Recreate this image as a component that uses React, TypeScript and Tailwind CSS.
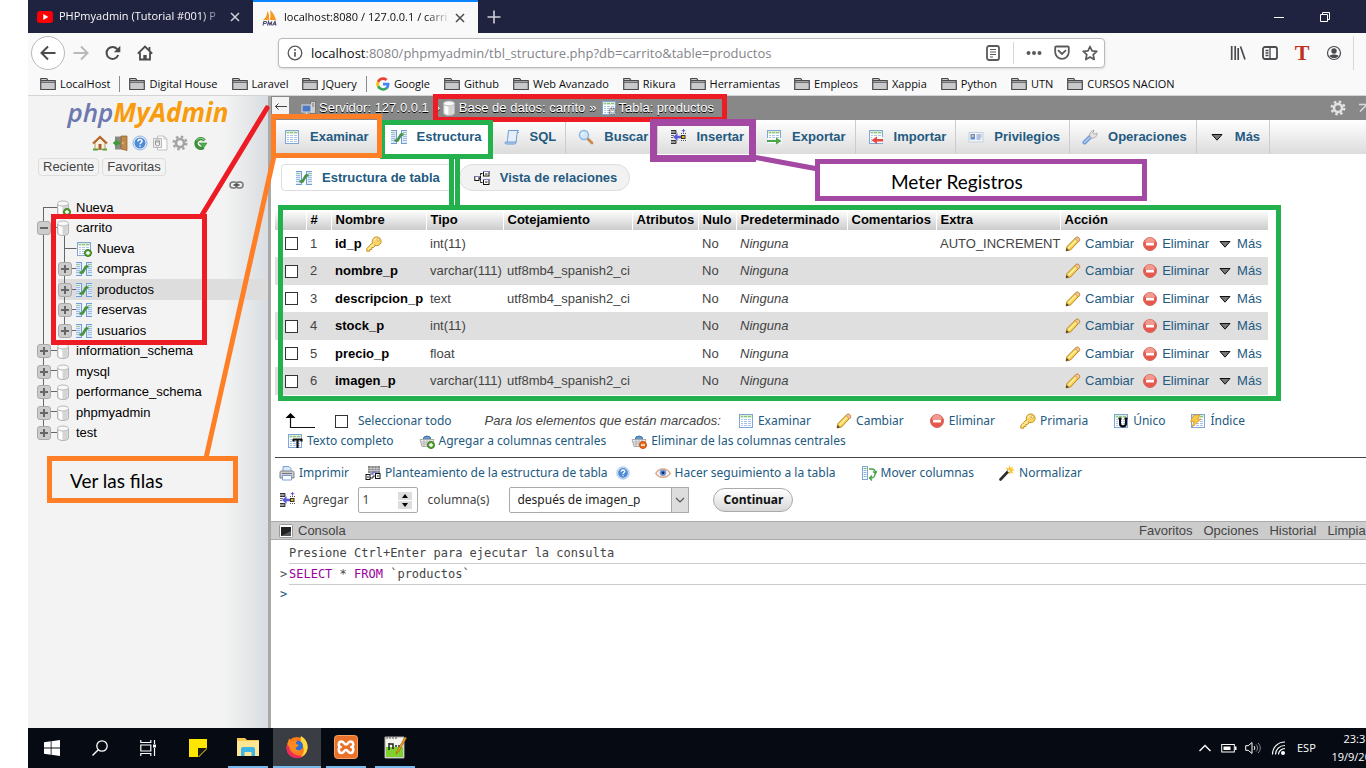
import React from 'react';

type P = { children: React.ReactNode; s?: number; w?: number; box?: string; cls?: string };
const Svg = ({ children, s = 16, w, box = '0 0 16 16', cls = '' }: P) => (
  <svg width={w ?? s} height={s} viewBox={box} fill="none" className={'shrink-0 ' + cls} aria-hidden="true">
    {children}
  </svg>
);

/* ---------- phpMyAdmin icons ---------- */
const Grid = () => (
  <>
    <rect x="1.5" y="1.5" width="13" height="13" fill="#fff" stroke="#7fa6d8" />
    <rect x="2" y="2" width="12" height="3" fill="#d8ecd0" />
    <path d="M3 3.5h2M6 3.5h3M10 3.5h3" stroke="#8fc27f" />
    <path d="M3 6.5h2M6 6.5h3M10 6.5h3M3 8.5h2M6 8.5h3M10 8.5h3M3 10.5h2M6 10.5h3M10 10.5h3M3 12.5h2M6 12.5h3M10 12.5h3" stroke="#a9c4ea" />
  </>
);
const Browse = () => <Svg><Grid /></Svg>;
const Plus = () => (
  <>
    <circle cx="12" cy="12" r="3.5" fill="#5aa334" stroke="#3c7d1f" />
    <path d="M10 12h4M12 10v4" stroke="#fff" strokeWidth="1.3" />
  </>
);
const Minus = () => (
  <>
    <circle cx="12" cy="12" r="3.5" fill="#ee6a1c" stroke="#c94f0d" />
    <path d="M10 12h4" stroke="#fff" strokeWidth="1.4" />
  </>
);
const Cyl = () => (
  <>
    <path d="M2.5 4v9c0 1.400 2.500 2.500 5.500 2.500s5.500-1.100 5.500-2.500V4" fill="#e6e6e6" stroke="#b4b4b4" />
    <path d="M4 5.500v8c1 .8 2 1 3 1.200V6.500z" fill="#fff" />
    <path d="M8 7v8c2 0 3.500-.5 4.500-1.500V5.500z" fill="#c9c9c9" opacity=".6" />
    <ellipse cx="8" cy="3.500" rx="5.500" ry="2.500" fill="#f8f8f8" stroke="#b9b9b9" />
  </>
);
const Db = () => <Svg><Cyl /></Svg>;
const DbNew = () => <Svg><Cyl /><Plus /></Svg>;
const TableNew = () => <Svg><Grid /><Plus /></Svg>;
const Gear = ({ c = '#a3a3a3' }: { c?: string }) => (
  <Svg>
    <circle cx="8" cy="8" r="6.300" stroke={c} strokeWidth="2.400" strokeDasharray="2.500 2.450" />
    <circle cx="8" cy="8" r="4" stroke={c} strokeWidth="2.600" />
  </Svg>
);
const TableGear = () => (
  <Svg>
    <Grid />
    <circle cx="11.500" cy="11.500" r="3" stroke="#777" strokeWidth="2.200" strokeDasharray="1.600 .75" />
    <circle cx="11.500" cy="11.500" r="2" stroke="#bbb" strokeWidth="1.400" />
  </Svg>
);
const Structure = () => (
  <Svg>
    <path d="M0 1.500h5.500v13H0zM10.500 1.500H16v13h-5.500z" fill="#dfebfa" />
    <path d="M0 1.500h5.500M0 14.500h5.500M5.500 1v14M10.500 1.500H16M10.500 14.500H16M10.500 1v14" stroke="#6f9bd6" />
    <path d="M0 3.500h4M12 3.500h4" stroke="#9ccb8e" />
    <path d="M0 5.500h4M0 7.500h4M0 9.500h4M0 11.500h4M12 5.500h4M12 7.500h4M12 9.500h4M12 11.500h4" stroke="#9dbce8" />
    <path d="M3.500 11.500h3L10 5.500h2.500" stroke="#459340" strokeWidth="2.600" strokeLinejoin="round" />
  </Svg>
);
const Sql = () => (
  <Svg>
    <path d="M4.500 1.500h10c-1.500 1-1.200 2-1.500 4l-1 8H2.500c1-1 1-2 1.200-4z" fill="#e4effb" stroke="#6b9bd2" />
    <path d="M1 13.500c0 1 .6 1.500 1.500 1.500h8c1 0 1.500-.8 1.500-2H1.500z" fill="#bcd4f0" stroke="#6b9bd2" />
    <path d="M13 3.500h2" stroke="#6b9bd2" />
  </Svg>
);
const Search = () => (
  <Svg>
    <path d="M9.500 9.500l4.500 4.500" stroke="#c98a4b" strokeWidth="2.800" strokeLinecap="round" />
    <circle cx="6" cy="6" r="4.500" fill="#d3e6fb" stroke="#8eb6e6" strokeWidth="1.500" />
    <path d="M3.500 6a2.500 2.500 0 0 1 2.500-2.500" stroke="#fff" />
  </Svg>
);
const Insert = () => (
  <Svg>
    <path d="M1 1.500h5v3H1M1 11.500h5v3H1" fill="#999" stroke="#333" />
    <path d="M1 6.500h3M1 8.500h2" stroke="#666" />
    <path d="M3 8l4.500-4V6.800H11v2.400H7.500V12z" fill="#5b5bd6" />
    <path d="M13.500 0v3.500M11.700 1.700h3.600" stroke="#5b5bd6" />
    <rect x="11.500" y="6.500" width="3.500" height="3" fill="#f2b712" stroke="#333" />
    <path d="M11 4.500h5M11 11.500h5" stroke="#555" strokeDasharray="1 1" />
  </Svg>
);
const Export = () => (
  <Svg>
    <Grid />
    <rect x="1" y="9" width="15" height="6" fill="#fff" opacity=".8" />
    <path d="M1 11h9V8.500l5.500 3.500-5.500 3.500V13H1z" fill="#4da545" />
  </Svg>
);
const Import = () => (
  <Svg>
    <Grid />
    <rect x="4" y="8" width="11" height="6" fill="#fff" opacity=".8" />
    <path d="M15 10H9V7.500L3.500 11.200 9 15v-2.500h6z" fill="#e5493f" />
  </Svg>
);
const Priv = () => (
  <Svg>
    <rect x="1" y="3.500" width="14" height="9.500" fill="#f1f5fb" stroke="#c5cfdd" />
    <rect x="2.500" y="5" width="4.500" height="5.500" fill="#5d8fd0" />
    <circle cx="4.700" cy="7" r="1.300" fill="#e5b98a" />
    <path d="M8.500 6h5M8.500 8h5M8.500 10h4" stroke="#6f93c4" />
  </Svg>
);
const Wrench = () => (
  <Svg>
    <path d="M2.500 13.500l6-6" stroke="#6d97d8" strokeWidth="4" strokeLinecap="round" />
    <path d="M2.500 13.500l5-5" stroke="#b7cff3" strokeWidth="1.500" strokeLinecap="round" />
    <path d="M8 8C7 5 8.500 2 12 1.200L10.800 4l1.400 1.300L15 4c.2 3.500-2.500 5.500-5.500 5z" fill="#e3e3e3" stroke="#999" strokeWidth=".8" />
  </Svg>
);
const Tri = () => (
  <Svg s={14} w={16} box="-1 0 16 14"><path d="M2 4.500h10L7 10.200z" fill="#777" stroke="#111" strokeLinejoin="round" /></Svg>
);
const Relation = () => (
  <Svg>
    <path d="M5 8.500h1.500M6.500 3.500v9M6.500 3.500H9M6.500 12.500H9" stroke="#111" strokeDasharray="2 .6" />
    <rect x=".8" y="6.500" width="4.200" height="4" fill="#fff" stroke="#111" />
    <rect x="9.500" y="1.500" width="5.500" height="4.500" fill="#fff" stroke="#111" />
    <rect x="9.500" y="9.500" width="5.500" height="5" fill="#fff" stroke="#111" />
    <path d="M9 1.500h6.500M9 9.500h6.500M.5 6.500h4.500" stroke="#7b7bd0" />
    <path d="M11 4h2.500M11 12h2.500" stroke="#111" />
  </Svg>
);
const KeyIcon = () => (
  <Svg>
    <path d="M.8 12.500v2.700h3v-1.700h2v-2h1.700L9.500 9.500 6.500 6.500z" fill="#f9da6c" stroke="#c99323" strokeLinejoin="round" />
    <circle cx="10.700" cy="5.300" r="4.400" fill="#f8d567" stroke="#c99323" />
    <path d="M2 13.500l6-6" stroke="#fdedaa" strokeWidth="1.200" />
    <path d="M8 4.500a3 3 0 0 1 2.500-2" stroke="#fff4c4" strokeWidth="1.200" />
    <circle cx="12.300" cy="3.800" r="1.200" fill="#fff" stroke="#c99323" strokeWidth=".7" />
  </Svg>
);
const Pencil = () => (
  <Svg>
    <path d="M1 15l1-4.500 8.500-8.500c1-1 2.500-1 3.300-.2s1 2.300 0 3.300L5.500 14z" fill="#f8d34c" stroke="#b9822b" />
    <path d="M3.500 12L11.500 4" stroke="#fdf0a8" strokeWidth="1.500" />
    <path d="M10 2.500l3.500 3.500 1-1.200c.6-1 .2-2.300-.5-3s-2-.9-2.800-.3z" fill="#f4c3a4" stroke="#b9822b" strokeWidth=".7" />
    <path d="M1 15l.7-2.800L3.800 14z" fill="#333" />
  </Svg>
);
const Drop = () => (
  <Svg>
    <circle cx="8" cy="8" r="6.500" fill="#e8574b" stroke="#d2695f" />
    <path d="M3 6.500a5 5 0 0 1 10 0z" fill="#f29a90" />
    <rect x="4" y="6.700" width="8" height="2.800" rx=".5" fill="#fff" />
  </Svg>
);
const Letter = ({ t }: { t: 'T' | 'U' }) => (
  <Svg>
    <Grid />
    {t === 'T' ? <path d="M6 6.500h9M10.500 6.500V15M6.500 6v2.500M14.500 6v2.500" stroke="#111" strokeWidth="2.200" />
      : <path d="M7 5v5.500c0 3.800 6 3.800 6 0V5M5.500 5.500h3M11.500 5.500h3" stroke="#111" strokeWidth="2.100" />}
  </Svg>
);
const LetterT = () => <Letter t="T" />;
const LetterU = () => <Letter t="U" />;
const Index = () => (
  <Svg><Grid /><path d="M4 2h6L7.500 6H11L2 14l2.200-5.500H.5z" fill="#fbc94a" stroke="#d9962a" strokeWidth=".8" /></Svg>
);
const Basket = () => (
  <>
    <path d="M4 7a4 4 0 0 1 8 0" fill="#5f97cf" stroke="#3f74ad" />
    <path d="M1 6.500h14l-2 7H3z" fill="#ececec" stroke="#aaa" />
    <path d="M2 9h12M3 11h10M5 7v6M8 7v6M11 7v6" stroke="#b5b5b5" />
  </>
);
const CentralAdd = () => <Svg><Basket /><Plus /></Svg>;
const CentralDel = () => <Svg><Basket /><Minus /></Svg>;
const Print = () => (
  <Svg>
    <path d="M4 7V1.500h6L12 3.500V7" fill="#dbe9fb" stroke="#7b9fd4" />
    <path d="M1 7.500C1 6.500 1.600 6 2.500 6h11c1 0 1.500.6 1.500 1.500V13H1z" fill="#c9ccd2" stroke="#7d828c" />
    <path d="M3.500 10.500h9v4.500h-9z" fill="#fff" stroke="#7b9fd4" />
    <path d="M3 8.500h10" stroke="#777" />
  </Svg>
);
const Propose = () => (
  <Svg>
    <rect x="3" y="1" width="12" height="7" fill="#888" />
    <path d="M3 3.500h12M3 5.500h12M6 1v7M9 1v7M12 1v7" stroke="#ddd" strokeWidth=".6" />
    <rect x="1" y="9.500" width="4" height="5" fill="#fff" stroke="#111" />
    <rect x="10.500" y="8.500" width="4.500" height="5" fill="#fff" stroke="#111" />
    <path d="M5 9h3V7h4" stroke="#7b7bd0" strokeWidth="1.500" />
    <path d="M2 12h2M12 11h2M5 13h3v-2h2" stroke="#111" strokeWidth=".9" />
  </Svg>
);
const Help = ({ s = 16 }: { s?: number }) => (
  <Svg s={s}>
    <circle cx="8" cy="8" r="7" fill="#eef5fd" stroke="#8fb3e0" />
    <circle cx="8" cy="8" r="5.600" fill="#4f8bd6" />
    <path d="M6 6.500c0-2.600 4-2.500 4-.2 0 1.500-2 1.400-2 3M8 10.500v1.300" stroke="#fff" strokeWidth="1.500" />
  </Svg>
);
const EyeIcon = () => (
  <Svg>
    <path d="M.8 8.300C4 2.500 12 2.500 15.200 8.300 12 13.500 4 13.500.8 8.300z" fill="#fdf6f1" stroke="#dca889" strokeWidth="1.400" />
    <circle cx="8" cy="7.800" r="3.300" fill="#6a9be0" />
    <circle cx="8" cy="7.800" r="1.500" fill="#162a55" />
  </Svg>
);
const Move = () => (
  <Svg>
    <rect x="1.500" y="1.500" width="5" height="13" fill="#fff" stroke="#7fa6d8" />
    <path d="M2.500 3.500h3" stroke="#6fb35f" />
    <path d="M2.500 5.500h3M2.500 7.500h3M2.500 9.500h3M2.500 11.500h3" stroke="#8fb1e3" />
    <path d="M8 4h2.500c3 0 4 2 4 4M14 9c0 2-1.500 4-4 4H8.500M11 10.500L8.500 13l2.500 2.500M12 6.500l2.500 2L16 6" stroke="#47a04a" strokeWidth="1.400" />
  </Svg>
);
const WandIcon = () => (
  <Svg>
    <path d="M10.500 0l1 3L14 1.500 13 4l3 1-3 1 1.500 3-3-1.500-1 2.500-1-3-3 .5L8.500 5 6.500 2.500l3 1z" fill="#fbc52d" />
    <path d="M1.500 14.500l7.500-8" stroke="#2c2c2c" strokeWidth="2.600" strokeLinecap="round" />
    <path d="M9 6.800l1.400-1.500" stroke="#eee" strokeWidth="2.400" />
  </Svg>
);
const HomePma = () => (
  <Svg>
    <path d="M3 8v6.500h10V8L8 3z" fill="#f7f0dc" stroke="#b99a68" />
    <path d="M1 8.500L8 2l7 6.500" stroke="#b5662c" strokeWidth="2.200" />
    <rect x="6.500" y="9" width="3" height="5.500" fill="#a8632d" />
    <path d="M1 14.500h5M10.500 14.500H15" stroke="#5ba33c" strokeWidth="2" />
  </Svg>
);
const Exit = () => (
  <Svg>
    <path d="M3 1.500h6v13H3z" fill="#8a8a8a" />
    <path d="M9 1h6v14.500L9 14z" fill="#c08a4a" stroke="#8d5d25" strokeWidth=".7" />
    <circle cx="10.800" cy="8" r=".8" fill="#ffe08a" />
    <path d="M8 6.500H5V4L.8 8 5 12V9.500h3z" fill="#3f9a37" />
  </Svg>
);
const Doc = () => (
  <Svg>
    <path d="M5.500 1h6.500l3 3v11H5.500z" fill="#fcfcfc" stroke="#c2c2c2" />
    <path d="M12 1v3h3" stroke="#c2c2c2" />
    <path d="M1.500 3.500h8v9h-8z" fill="#ededed" stroke="#b8b8b8" />
    <ellipse cx="5.500" cy="6" rx="2" ry="1" stroke="#999" /><path d="M3.500 6v4c0 1 4 1 4 0V6" stroke="#999" />
  </Svg>
);
const Reload = () => (
  <Svg>
    <path d="M12.500 5.500A4.800 4.800 0 1 0 11.500 12.500" stroke="#3d8f3a" strokeWidth="3.400" />
    <path d="M12.300 5A4.800 4.800 0 0 0 4.500 5.500" stroke="#8fd08a" strokeWidth="1.200" />
    <path d="M7 8h8l-3.500 5z" fill="#4fae4a" stroke="#3d8f3a" strokeWidth=".6" />
  </Svg>
);
const Chain = () => (
  <Svg s={10} w={15} box="0 0 15 10">
    <rect x="1" y="2" width="7" height="6" rx="3" stroke="#777" strokeWidth="1.500" />
    <rect x="7" y="2" width="7" height="6" rx="3" stroke="#777" strokeWidth="1.500" />
    <path d="M4.500 5h6" stroke="#444" strokeWidth="1.500" />
  </Svg>
);
const Server = () => (
  <Svg>
    <rect x="9.500" y="1.500" width="5" height="12" fill="#ccc" stroke="#777" />
    <path d="M11 4h2M11 6h2" stroke="#777" />
    <rect x="1" y="5" width="9" height="7" fill="#4d79c4" stroke="#ddd" />
    <path d="M3 14.500h6M5.500 12.500v2" stroke="#ddd" strokeWidth="1.500" />
  </Svg>
);
const Term = () => (
  <Svg s={14} box="0 0 14 14">
    <rect x=".5" y=".5" width="13" height="13" rx="1" fill="#fff" stroke="#999" />
    <rect x="2" y="3" width="10" height="9" fill="#222" /><path d="M2 12h10V7z" fill="#555" />
  </Svg>
);

/* ---------- browser chrome ---------- */
const Folder = () => (
  <Svg>
    <path d="M.7 13.500V2.500h6L8 4.500h7.300v9z" fill="#c9c9cb" stroke="#4a4a4e" strokeWidth="1.200" strokeLinejoin="round" />
    <path d="M1 6.200h14M1 4.500h7" stroke="#4a4a4e" />
  </Svg>
);
const GoogleG = () => (
  <Svg s={14} box="0 0 48 48">
    <path fill="#4285F4" d="M46 24.500c0-1.600-.1-3.100-.4-4.500H24v9h12.400c-.6 2.900-2.200 5.300-4.600 7l7.500 5.800C43.500 37.800 46 31.700 46 24.500z" />
    <path fill="#34A853" d="M24 47c6.200 0 11.400-2 15.300-5.500L31.800 36c-2 1.400-4.700 2.200-7.800 2.200-6 0-11-4-12.900-9.500l-7.700 6C7.200 42 15 47 24 47z" />
    <path fill="#FBBC05" d="M11.100 28.700c-.9-3-.9-6.300 0-9.300l-7.700-6c-3.200 6.500-3.200 14.800 0 21.300z" />
    <path fill="#EA4335" d="M24 10c3.400 0 6.400 1.200 8.800 3.400l6.600-6.600C35.400 3.200 30.200 1 24 1 15 1 7.200 6 3.400 13.400l7.700 6C13 14 18 10 24 10z" />
  </Svg>
);
const marks = ['LocalHost', '|', 'Digital House', 'Laravel', 'JQuery', '|', 'Google', 'Github', 'Web Avanzado', 'Rikura', 'Herramientas', 'Empleos', 'Xappia', 'Python', 'UTN', 'CURSOS NACION'];

function Chrome() {
  return (
    <header className="shrink-0 bg-[#f9f9fa] font-['Open_Sans',sans-serif] text-[#0c0c0d]">
      <div className="flex h-[33px] bg-[#202340] text-[11px]">
        <div className="flex w-[225px] items-center pl-[9px] text-[#f9f9fa]">
          <Svg><rect y="2" width="16" height="12" rx="3" fill="#f00" /><path d="M6.300 5l5 3-5 3z" fill="#fff" /></Svg>
          <span className="ml-[6px] w-[167px] whitespace-nowrap [mask-image:linear-gradient(to_right,#000_85%,transparent)]">PHPmyadmin (Tutorial #001) P</span>
          <button aria-label="Cerrar pestaña" className="ml-1"><Svg s={10} box="0 0 10 10"><path d="M1 1l8 8M9 1l-8 8" stroke="#d0d0d8" strokeWidth="1.500" /></Svg></button>
        </div>
        <div className="flex w-[225px] items-center border-t-2 border-[#0a84ff] bg-[#f9f9fa] pl-[9px]">
          <Svg>
            <path d="M1 10C4 8 5 5 5.500 1 7.500 4 7.500 8 6.500 10zM7.500 10c1.300-3 1.300-6 .5-10 3.500 3 5 6.500 6 10z" fill="#f8981d" />
            <path d="M1 15.500l.8-4h1.800c1.500 0 1 2-.3 2H1.700M5.500 15.500l1-4 1.200 3 2-3-.6 4M10.500 15.500l2.500-4 1 4M11.500 14.300h2.500" stroke="#4b4b6e" strokeWidth="1.100" />
          </Svg>
          <span className="ml-[6px] w-[167px] whitespace-nowrap [mask-image:linear-gradient(to_right,#000_85%,transparent)]">localhost:8080 / 127.0.0.1 / carri</span>
          <button aria-label="Cerrar pestaña" className="ml-1"><Svg s={10} box="0 0 10 10"><path d="M1 1l8 8M9 1l-8 8" stroke="#4a4a4f" strokeWidth="1.500" /></Svg></button>
        </div>
        <button aria-label="Nueva pestaña" className="ml-2"><Svg><path d="M8 1.500v13M1.500 8h13" stroke="#d0d0d8" strokeWidth="1.600" /></Svg></button>
        <div className="ml-auto flex items-center gap-9 pr-9">
          <button aria-label="Minimizar"><Svg s={10} box="0 0 10 10"><path d="M0 5.500h10" stroke="#fff" /></Svg></button>
          <button aria-label="Restaurar"><Svg s={10} box="0 0 10 10"><path d="M.5 2.500h7v7h-7zM2.500 2.500v-2h7v7h-2" stroke="#fff" /></Svg></button>
        </div>
      </div>
      <div className="flex h-10 items-center pl-[3px]">
        <button aria-label="Atrás" className="flex size-[34px] items-center justify-center rounded-full border border-[#b9b9ba] bg-white"><Svg><path d="M15.500 8H1.500M8 1.500L1.500 8 8 14.500" stroke="#4a4a4f" strokeWidth="2" /></Svg></button>
        <button aria-label="Adelante" className="ml-2"><Svg><path d="M.5 8h14M8 1.500L14.500 8 8 14.500" stroke="#b9b9ba" strokeWidth="2" /></Svg></button>
        <button aria-label="Recargar" className="ml-4"><Svg><path d="M13.200 10A6 6 0 1 1 12.500 4.500" stroke="#4a4a4f" strokeWidth="2" /><path d="M15.300.8v6.500H8.800z" fill="#4a4a4f" /></Svg></button>
        <button aria-label="Inicio" className="ml-4"><Svg><path d="M.8 8.700L8 1.500l7.200 7.200M3 7.500v7h10v-7M12.500 2v4" stroke="#4a4a4f" strokeWidth="1.800" /><path d="M6.300 14.500V10h3.400v4.500z" fill="#4a4a4f" /></Svg></button>
        <div className="ml-[125px] flex h-[30px] flex-1 items-center rounded-sm border border-[#b9b9bb] bg-white pl-2 pr-[6px] shadow-sm">
          <Svg><circle cx="8" cy="8" r="6.800" stroke="#5a5a5e" strokeWidth="1.300" /><path d="M8 7v4.800M8 4v1.700" stroke="#5a5a5e" strokeWidth="1.700" /></Svg>
          <span className="relative ml-2 flex-1 pt-[2px] text-[13px] text-[#84848a]">
            <input aria-label="Dirección" readOnly className="absolute inset-0 w-full bg-transparent outline-none" />
            <span className="text-[#0c0c0d]">localhost</span>:8080/phpmyadmin/tbl_structure.php?db=carrito&amp;table=productos
          </span>
          <Svg><rect x="2" y="1" width="12" height="14" rx="2" stroke="#5a5a5e" strokeWidth="1.800" /><path d="M5 4.500h6M5 7h6M5 9.500h6M5 12h3" stroke="#5a5a5e" /></Svg>
          <span className="ml-3 h-[22px] w-px bg-[#d7d7db]" />
          <Svg cls="ml-3"><g fill="#5a5a5e"><circle cx="2.500" cy="8" r="2" /><circle cx="8" cy="8" r="2" /><circle cx="13.500" cy="8" r="2" /></g></Svg>
          <Svg cls="ml-3"><path d="M1.200 2.500c0-.6.400-1 1-1h11.600c.6 0 1 .4 1 1V7a6.800 6.800 0 0 1-13.600 0z" stroke="#5a5a5e" strokeWidth="1.800" /><path d="M4.500 5.700L8 9l3.500-3.300" stroke="#5a5a5e" strokeWidth="1.800" strokeLinecap="round" /></Svg>
          <Svg cls="ml-3"><path d="M8 1.500l2 4.400 4.800.5-3.600 3.300 1 4.800L8 12l-4.200 2.500 1-4.800L1.200 6.400 6 5.900z" stroke="#5a5a5e" strokeWidth="1.700" strokeLinejoin="round" /></Svg>
        </div>
        <div className="ml-[125px] flex items-center gap-4">
          <Svg><path d="M1.700 1v14M5.200 1v14M8.200 3v12M10.500 1.500l4.500 13" stroke="#4a4a4f" strokeWidth="1.700" /></Svg>
          <Svg><rect x="1" y="2" width="14" height="12" rx="2" stroke="#4a4a4f" strokeWidth="1.800" /><path d="M8 2v12M3.500 5.500h3M3.500 8h3M3.500 10.500h3" stroke="#4a4a4f" strokeWidth="1.300" /></Svg>
          <span className="w-4 text-center font-['Liberation_Serif',serif] text-[22px] font-bold leading-4 text-[#c22f1c]">T</span>
          <Svg><circle cx="8" cy="8" r="6.500" stroke="#4a4a4f" strokeWidth="1.200" /><circle cx="8" cy="6" r="2.700" fill="#4a4a4f" /><path d="M3.500 11c1-2 8-2 9 0-2 2.800-7 2.800-9 0z" fill="#4a4a4f" /></Svg>
          <span className="-ml-[5px] mr-3 h-[34px] w-px bg-[#d7d7db]" />
        </div>
      </div>
      <nav className="flex h-[23px] items-center gap-[14px] border-b border-[#d4d4d6] pl-3 text-[11px]">
        {marks.map((m, i) => m === '|'
          ? <span key={i} className="-mx-[5px] h-4 w-px bg-[#8a8a8d]" />
          : <a key={i} href="#" className="flex items-center gap-1 whitespace-nowrap">{m === 'Google' ? <GoogleG /> : <Folder />}{m}</a>)}
      </nav>
    </header>
  );
}

/* ---------- sidebar ---------- */
const tree: { n: string; k: 'new' | 'db' | 'tnew' | 't'; sel?: boolean }[] = [
  { n: 'Nueva', k: 'new' }, { n: 'carrito', k: 'db' }, { n: 'Nueva', k: 'tnew' }, { n: 'compras', k: 't' },
  { n: 'productos', k: 't', sel: true }, { n: 'reservas', k: 't' }, { n: 'usuarios', k: 't' },
  { n: 'information_schema', k: 'db' }, { n: 'mysql', k: 'db' }, { n: 'performance_schema', k: 'db' },
  { n: 'phpmyadmin', k: 'db' }, { n: 'test', k: 'db' },
];
const Toggle = ({ open }: { open?: boolean }) => (
  <button aria-label={open ? 'Contraer' : 'Expandir'} className="block shrink-0">
    <Svg s={14} box="0 0 14 14" cls="block"><rect x=".5" y=".5" width="13" height="13" rx="2.500" fill="#ccc" stroke="#aaa" /><path d={open ? 'M3 7h8' : 'M3 7h8M7 3v8'} stroke="#666" strokeWidth="2" /></Svg>
  </button>
);
function Sidebar() {
  return (
    <aside className="flex w-[243px] shrink-0 flex-col border-r-[3px] border-[#a9a9a9] bg-[linear-gradient(to_right,#f3f3f3_82%,#d9dde1)] text-[13px]">
      <div className="h-9 text-center font-['Open_Sans',sans-serif] text-[26px] font-semibold italic leading-8 text-[#6c78af]">php<span className="font-bold text-[#f89c0e]">MyAdmin</span></div>
      <div className="mt-[3px] flex gap-1 pl-16">
        <HomePma /><Exit /><Help /><Doc /><Gear /><Reload />
      </div>
      <div className="mt-[7px] flex gap-[3px] pl-[10px] leading-4 text-[#444]">
        <button className="rounded-[4px] border border-[#ddd] px-1">Reciente</button>
        <button className="rounded-[4px] border border-[#ddd] px-1">Favoritas</button>
      </div>
      <div className="mt-1 flex h-[17px] justify-end pr-6"><Chain /></div>
      <ul className="relative text-black">
        <svg className="absolute left-0 top-0" width="70" height="246" fill="none" stroke="#666" aria-hidden="true">
          <path d="M15.500 10v225M15.500 10.500h15M15.500 30.500h15M15.500 153.500h15M15.500 173.500h15M15.500 194.500h15M15.500 214.500h15M15.500 235.500h15M36.500 38v95M36.500 51.500h12M36.500 71.500h12M36.500 92.500h12M36.500 112.500h12M36.500 133.500h12" />
        </svg>
        {tree.map((t, i) => {
          const child = t.k[0] === 't';
          return (
            <li key={i} className={'flex items-center odd:h-5 even:h-[21px] ' + (child ? 'ml-[30px] ' : 'pl-[9px] ') + (t.sel ? 'bg-[#ddd]' : '')}>
              <span className="relative flex w-full items-center">
                <span className="w-[18px]">{t.k !== 'new' && t.k !== 'tnew' && <Toggle open={t.n === 'carrito'} />}</span>
                {t.k === 'new' ? <DbNew /> : t.k === 'db' ? <Db /> : t.k === 'tnew' ? <TableNew /> : <Structure />}
                <a href="#" className="ml-[5px]">{t.n}</a>
              </span>
            </li>
          );
        })}
      </ul>
    </aside>
  );
}

/* ---------- main area ---------- */
const tabs: [string, React.FC][] = [['Examinar', Browse], ['Estructura', Structure], ['SQL', Sql], ['Buscar', Search], ['Insertar', Insert], ['Exportar', Export], ['Importar', Import], ['Privilegios', Priv], ['Operaciones', Wrench], ['Más', Tri]];
const heads = ['', '#', 'Nombre', 'Tipo', 'Cotejamiento', 'Atributos', 'Nulo', 'Predeterminado', 'Comentarios', 'Extra', 'Acción'];
const rows = [
  ['id_p', 'int(11)', '', 'AUTO_INCREMENT'], ['nombre_p', 'varchar(111)', 'utf8mb4_spanish2_ci', ''], ['descripcion_p', 'text', 'utf8mb4_spanish2_ci', ''],
  ['stock_p', 'int(11)', '', ''], ['precio_p', 'float', '', ''], ['imagen_p', 'varchar(111)', 'utf8mb4_spanish2_ci', ''],
];
const Check = ({ label, id }: { label?: string; id?: string }) => (
  <input type="checkbox" id={id} aria-label={label} className="block size-[13px] shrink-0 appearance-none border border-[#333] bg-white" />
);
const Act = ({ I, t }: { I: React.FC; t: string }) => (
  <a href="#" className="flex items-center gap-1 whitespace-nowrap text-[#235a81]"><I />{t}</a>
);

function Main() {
  return (
    <main className="flex min-w-0 flex-1 flex-col overflow-hidden bg-white text-[13px] text-[#444]">
      <div className="flex h-6 shrink-0 items-center whitespace-nowrap bg-[#888] text-white [text-shadow:0_1px_0_#000]">
        <button aria-label="Ocultar panel" className="ml-px mt-px flex h-[17px] w-[17px] items-center justify-center self-start bg-[#f3f3f3]"><Svg s={12} box="0 0 12 12"><path d="M0 6.500h12M3.500 3.500L.5 6.500l3 3" stroke="#444" /></Svg></button>
        <a href="#" className="ml-3 flex items-center gap-[2px]"><Server />Servidor: 127.0.0.1</a>
        <span className="ml-1 w-2">»</span>
        <a href="#" className="flex items-center gap-[2px]"><Db />Base de datos: carrito</a>
        <span className="mx-1">»</span>
        <a href="#" className="flex items-center gap-[2px]"><TableGear />Tabla: productos</a>
        <span className="ml-auto"><Gear c="#e3e3e3" /></span>
        <Svg cls="-mr-2 ml-3"><path d="M1 4.500h8v8M9 4.500l-7 7" stroke="#ddd" strokeWidth="1.500" /></Svg>
      </div>
      <nav className="flex h-[34px] shrink-0 bg-[linear-gradient(to_bottom,#fff,#dcdcdc)] pl-px font-bold text-[#235a81]">
        {tabs.map(([n, I]) => (
          <a key={n} href="#" className={'flex items-center gap-[10px] border-r border-[#ccc] pl-3 pr-[9px] ' + (n === 'Estructura' ? 'bg-white' : '')}><I />{n}</a>
        ))}
      </nav>
      <div className="mt-[10px] flex gap-[6px] pl-[10px] font-bold text-[#235a81]">
        <a href="#" className="flex h-[27px] items-center gap-[10px] rounded-[4px] border border-[#ddd] bg-white pl-[14px] pr-3"><Structure />Estructura de tabla</a>
        <a href="#" className="flex h-[27px] items-center gap-[10px] rounded-full border border-[#ddd] bg-[#f2f2f2] pl-[14px] pr-3"><Relation />Vista de relaciones</a>
      </div>
      <table className="ml-1 mt-[19px] w-[993px] table-fixed border-collapse">
        <colgroup>
          <col className="w-[31px]" /><col className="w-[25px]" /><col className="w-[95px]" /><col className="w-[77px]" /><col className="w-[129px]" /><col className="w-[66px]" /><col className="w-[38px]" /><col className="w-[111px]" /><col className="w-[89px]" /><col className="w-[124px]" /><col className="w-[208px]" />
        </colgroup>
        <thead>
          <tr className="h-5 bg-[linear-gradient(to_bottom,#fff,#ccc)] text-left text-black">
            {heads.map((h, i) => <th key={i} className="whitespace-nowrap border-r border-white p-0 pl-1 font-bold leading-5">{h}</th>)}
          </tr>
        </thead>
        <tbody>
          {rows.map((r, i) => (
            <tr key={r[0]} className="whitespace-nowrap odd:h-[27px] even:h-7 even:bg-[#dfdfdf] [&>td]:p-0 [&>td]:pl-1">
              <td><span className="flex pl-[6px]"><Check label={'Seleccionar ' + r[0]} /></span></td>
              <td>{i + 1}</td>
              <td className="font-bold text-black"><span className="flex items-center gap-1">{r[0]}{i === 0 && <KeyIcon />}</span></td>
              <td>{r[1]}</td><td>{r[2]}</td><td /><td>No</td><td className="italic">Ninguna</td><td /><td>{r[3]}</td>
              <td><span className="flex gap-2 pl-px"><Act I={Pencil} t="Cambiar" /><Act I={Drop} t="Eliminar" /><Act I={Tri} t="Más" /></span></td>
            </tr>
          ))}
        </tbody>
      </table>
      <div className="font-['Noto_Sans',sans-serif] text-[12px]">
        <div className="mt-4 flex h-5 items-center gap-[25px] pl-[14px]">
          <span className="flex items-center">
            <Svg s={16} w={30} box="0 0 30 16"><path d="M5.500 4v10.500H30" stroke="#111" strokeWidth="1.200" /><path d="M5.500 0l5 5H.5z" fill="#000" /></Svg>
            <span className="ml-5"><Check id="all" /></span>
            <label htmlFor="all" className="ml-[10px] text-[#235a81]">Seleccionar todo</label>
            <i className="-mr-2 ml-[33px] font-['Liberation_Sans',sans-serif] text-[13px]">Para los elementos que están marcados:</i>
          </span>
          <Act I={Browse} t="Examinar" /><Act I={Pencil} t="Cambiar" /><Act I={Drop} t="Eliminar" /><Act I={KeyIcon} t="Primaria" />
          <Act I={LetterU} t="Único" /><Act I={Index} t="Índice" />
        </div>
        <div className="flex h-5 items-center gap-[25px] pl-4">
          <Act I={LetterT} t="Texto completo" /><Act I={CentralAdd} t="Agregar a columnas centrales" /><Act I={CentralDel} t="Eliminar de las columnas centrales" />
        </div>
        <hr className="ml-1 mt-[6px] border-[#444]" />
        <div className="mt-[3px] flex h-6 items-center gap-[25px] pl-2">
          <span className="flex items-center gap-4"><Act I={Print} t="Imprimir" />
            <span className="flex items-center gap-2"><Act I={Propose} t="Planteamiento de la estructura de tabla" /><Help s={14} /></span>
          </span>
          <Act I={EyeIcon} t="Hacer seguimiento a la tabla" /><Act I={Move} t="Mover columnas" /><Act I={WandIcon} t="Normalizar" />
        </div>
        <form className="mt-[2px] flex h-[26px] items-center pl-2" onSubmit={(e) => e.preventDefault()}>
          <Insert />
          <label htmlFor="num" className="ml-2">Agregar</label>
          <span className="ml-[9px] flex h-[26px] w-[60px] items-center rounded-[2px] border border-[#aaa] bg-white pl-1 pr-[5px]">
            <input id="num" type="text" inputMode="numeric" defaultValue="1" className="w-full min-w-0 flex-1 outline-none" />
            <span className="flex w-[14px] shrink-0 flex-col gap-px">
              <button type="button" aria-label="Más columnas" className="flex h-2 items-center justify-center bg-[#ddd]"><Svg s={4} w={6} box="0 0 6 4"><path d="M3 0l3 4H0z" fill="#000" /></Svg></button>
              <button type="button" aria-label="Menos columnas" className="flex h-2 items-center justify-center bg-[#ddd]"><Svg s={4} w={6} box="0 0 6 4"><path d="M3 4L0 0h6z" fill="#000" /></Svg></button>
            </span>
          </span>
          <span className="ml-[10px]">columna(s)</span>
          <span className="relative ml-5 flex h-[26px] w-[180px] items-center">
            <select aria-label="Posición" className="h-full w-full appearance-none rounded-[2px] border border-[#aaa] bg-white pl-[7px] text-[12px] text-[#222]"><option>después de imagen_p</option></select>
            <span className="pointer-events-none absolute right-0 top-0 flex h-full w-[18px] items-center justify-center border border-[#aaa] bg-[#ddd]"><Svg s={10} box="0 0 10 10"><path d="M1 3l4 4 4-4" stroke="#555" strokeWidth="1.200" /></Svg></span>
          </span>
          <button className="ml-6 h-6 rounded-full border border-[#aaa] bg-[linear-gradient(to_bottom,#fff,#d8d8d8)] px-[9px] font-bold text-[#111]">Continuar</button>
        </form>
      </div>
      <section className="mt-2 flex-1">
        <div className="flex h-[19px] items-center border-y border-[#aaa] bg-[#ccc] pl-2">
          <Term /><span className="ml-[5px]">Consola</span>
          <span className="-mr-1 ml-auto flex gap-[11px]"><a href="#">Favoritos</a><a href="#">Opciones</a><a href="#">Historial</a><a href="#">Limpiar</a></span>
        </div>
        <div className="font-['DejaVu_Sans_Mono',monospace] text-[12px]">
          <p className="ml-[18px] mt-1 h-5 border-b border-[#ccc] leading-[18px]">Presione Ctrl+Enter para ejecutar la consulta</p>
          <div className="flex h-[21px] leading-5">
            <span className="w-[18px] pl-[9px] text-[#555]">&gt;</span>
            <code className="flex-1 border-b border-[#ccc] font-['DejaVu_Sans_Mono',monospace]"><b className="font-normal text-[#909]">SELECT</b> * <b className="font-normal text-[#909]">FROM</b> `productos`</code>
          </div>
          <p className="pl-[9px] leading-[18px] text-[#235a81]">&gt;</p>
        </div>
      </section>
    </main>
  );
}

/* ---------- taskbar ---------- */
const apps: { n: string; cur?: boolean; d: React.ReactNode }[] = [
  { n: 'Explorador', d: <><path d="M1 3h8l2 2h12v16H1z" fill="#f5c84f" /><path d="M1 6h22v15H1z" fill="#ffe694" /><path d="M5 21v-7c0-1 .6-2 2-2h10c1.400 0 2 1 2 2v7h-3.500v-4h-7v4z" fill="#3fb4e8" /></> },
  { n: 'Firefox', cur: true, d: <><circle cx="12" cy="12.500" r="10.500" fill="#ff7a1a" /><path d="M1.500 12a10.500 10.500 0 0 0 18 8C13 22 4 20 3.500 8z" fill="#ef2a5d" /><path d="M16 1c5 3 7.500 8 6.500 13-1 4-3.500 7-7 8 3-3 4-6 3-9-1-4-4-6-2.500-12z" fill="#ffd83b" /><circle cx="12.500" cy="11" r="5.500" fill="#2a6fd6" /><path d="M2.500 9L4 3.500l3 3c2-.8 4-.8 5.500-.3-1.500.8-2.500 2-1 2.800 2 1 2.500.5 2 2-1.500.8-3.500 1.500-2.500 3 1.500 2 4.500 1.500 6.500-.5-1 4-9 6-12 1C4.500 12 3.500 11 2.500 9z" fill="#ff8a1f" /></> },
  { n: 'XAMPP', d: <><rect x=".5" y=".5" width="23" height="23" rx="3" fill="#e9712a" stroke="#f7a165" /><path d="M12 9.500c-2.200 0-2-3-4.500-3-3.500 0-3.500 5.500-.8 5.500-2.700 0-2.700 6 .8 6 2.500 0 2.300-3 4.500-3s2 3 4.500 3c3.500 0 3.500-6 .8-6 2.700 0 2.700-5.500-.8-5.500-2.500 0-2.300 3-4.500 3z" stroke="#fff" strokeWidth="2.600" strokeLinejoin="round" /></> },
  { n: 'Notepad++', d: <><path d="M2 2h19v21H2z" fill="#f4f4ef" stroke="#aaa" /><path d="M3 12h17v10H3z" fill="#7fd02d" /><path d="M4 2v2M7 2v2M10 2v2M13 2v2" stroke="#555" /><path d="M6 8v7M6 9h4v5M12 11h2M15 11h2" stroke="#222" strokeWidth="1.500" /><path d="M22 2l-8 14-1 3 2.500-2 8-14z" fill="#f5a51e" stroke="#9c5f10" strokeWidth=".7" /></> },
];
function Taskbar() {
  return (
    <footer className="flex h-10 shrink-0 items-stretch overflow-hidden bg-[#060a13] font-['Open_Sans',sans-serif] text-[11px] text-white">
      <button aria-label="Inicio" className="flex w-12 items-center justify-center"><Svg><path d="M0 2.200l6.700-.9v6.300H0zM7.500 1.200L16 0v7.600H7.500zM0 8.400h6.700v6.300L0 13.800zM7.500 8.400H16V16l-8.500-1.200z" fill="#fff" /></Svg></button>
      <button aria-label="Buscar" className="flex w-12 items-center justify-center"><Svg><circle cx="10" cy="6" r="5.200" stroke="#fff" strokeWidth="1.300" /><path d="M6.300 9.700L.5 15.500" stroke="#fff" strokeWidth="1.400" /></Svg></button>
      <button aria-label="Vista de tareas" className="flex w-12 items-center justify-center"><Svg><path d="M.8 0v2.500h10V0M.8 16v-2.500h10V16M.8 5h10v6H.8zM14.500 0v4M14.500 8v8" stroke="#fff" strokeWidth="1.200" /><path d="M13 4.500h3v3h-3z" fill="#fff" /></Svg></button>
      <button aria-label="Notas" className="flex w-[52px] items-center justify-center"><Svg s={18} box="0 0 18 18"><path d="M0 0h18v18H0z" fill="#ffe600" /><path d="M9 18V9h9z" fill="#1a1a1a" /><path d="M10 18l8-8v8z" fill="#060a13" /></Svg></button>
      {apps.map((a) => (
        <button key={a.n} aria-label={a.n} className={'mr-px flex w-12 flex-col items-center justify-between ' + (a.cur ? 'bg-[#3a3d43]' : '')}>
          <span className="flex flex-1 items-center"><Svg s={24} box="0 0 24 24">{a.d}</Svg></span>
          <span className={'h-[2px] bg-[#76b9ed] ' + (a.cur ? 'w-full' : 'w-10')} />
        </button>
      ))}
      <div className="-mr-5 ml-auto flex items-center">
        <Svg s={12} box="0 0 12 12"><path d="M.5 9L6 3.500 11.500 9" stroke="#fff" strokeWidth="1.400" /></Svg>
        <Svg cls="ml-[10px]"><rect x=".7" y="4.500" width="12.600" height="7.500" stroke="#fff" /><path d="M2.500 6.500h7v3.500h-7zM14 6.500h1.500v3.500H14z" fill="#fff" /></Svg>
        <Svg cls="ml-2"><path d="M.7 5.700h2.500L7 2.500v11l-3.800-3.200H.7zM9 6c1 1 1 3 0 4" stroke="#fff" /><path d="M11 4.500c2 2 2 5 0 7M13 3c3 3 3 7 0 10" stroke="#8d9098" /></Svg>
        <Svg cls="ml-[10px]"><path d="M1.500 14.500c0-7 5-12.500 12.500-12.500M4.500 14.500c0-5 4-9 9.500-9M7.500 14.500c0-3.500 3-6 6.500-6" stroke="#fff" strokeWidth="1.200" /><circle cx="12" cy="13" r="2" fill="#fff" /></Svg>
        <span className="ml-[10px] w-5">ESP</span>
        <span className="ml-3 w-[57px] text-center leading-[18px]">23:31<br />19/9/2019</span>
      </div>
    </footer>
  );
}

/* ---------- hand-drawn notes over the window ---------- */
function Notes() {
  return (
    <div className="pointer-events-none absolute inset-0 overflow-hidden font-[Lato,sans-serif] text-[19px] text-black">
      <svg className="absolute left-0 top-0" width="1366" height="768" fill="none" strokeWidth="5" aria-hidden="true">
        <g stroke="#ed1c24"><rect x="53.500" y="216.500" width="151" height="126" /><path d="M202 215l65-107" strokeLinecap="round" /><rect x="435.500" y="96.500" width="289" height="23" /></g>
        <g stroke="#22b14c"><rect x="382.500" y="122.500" width="108" height="34" /><path d="M451.500 158v52M457.500 158v52" /><rect x="280.500" y="207.500" width="998" height="191" /></g>
        <g stroke="#ff7f27"><path d="M274 156l-68 302" /><rect x="273.500" y="116.500" width="106" height="39" /></g>
        <g stroke="#a349a4"><rect x="653.500" y="122.500" width="99" height="36" strokeWidth="7" /><path d="M753 157l65 12" /></g>
      </svg>
      <div className="absolute left-[47px] top-[456px] flex h-[47px] w-[191px] items-center border-[5px] border-[#ff7f27] pl-[18px] pt-1">Ver las filas</div>
      <div className="absolute left-[815px] top-[159px] flex h-[42px] w-[332px] items-center border-[5px] border-[#a349a4] bg-white pl-[71px] pt-1">Meter Registros</div>
    </div>
  );
}

export default function App() {
  return (
    <div className="relative flex h-screen flex-col overflow-hidden bg-white pl-7 font-['Liberation_Sans',Arial,sans-serif]">
      <Chrome />
      <div className="flex min-h-0 flex-1"><Sidebar /><Main /></div>
      <Taskbar />
      <Notes />
    </div>
  );
}
